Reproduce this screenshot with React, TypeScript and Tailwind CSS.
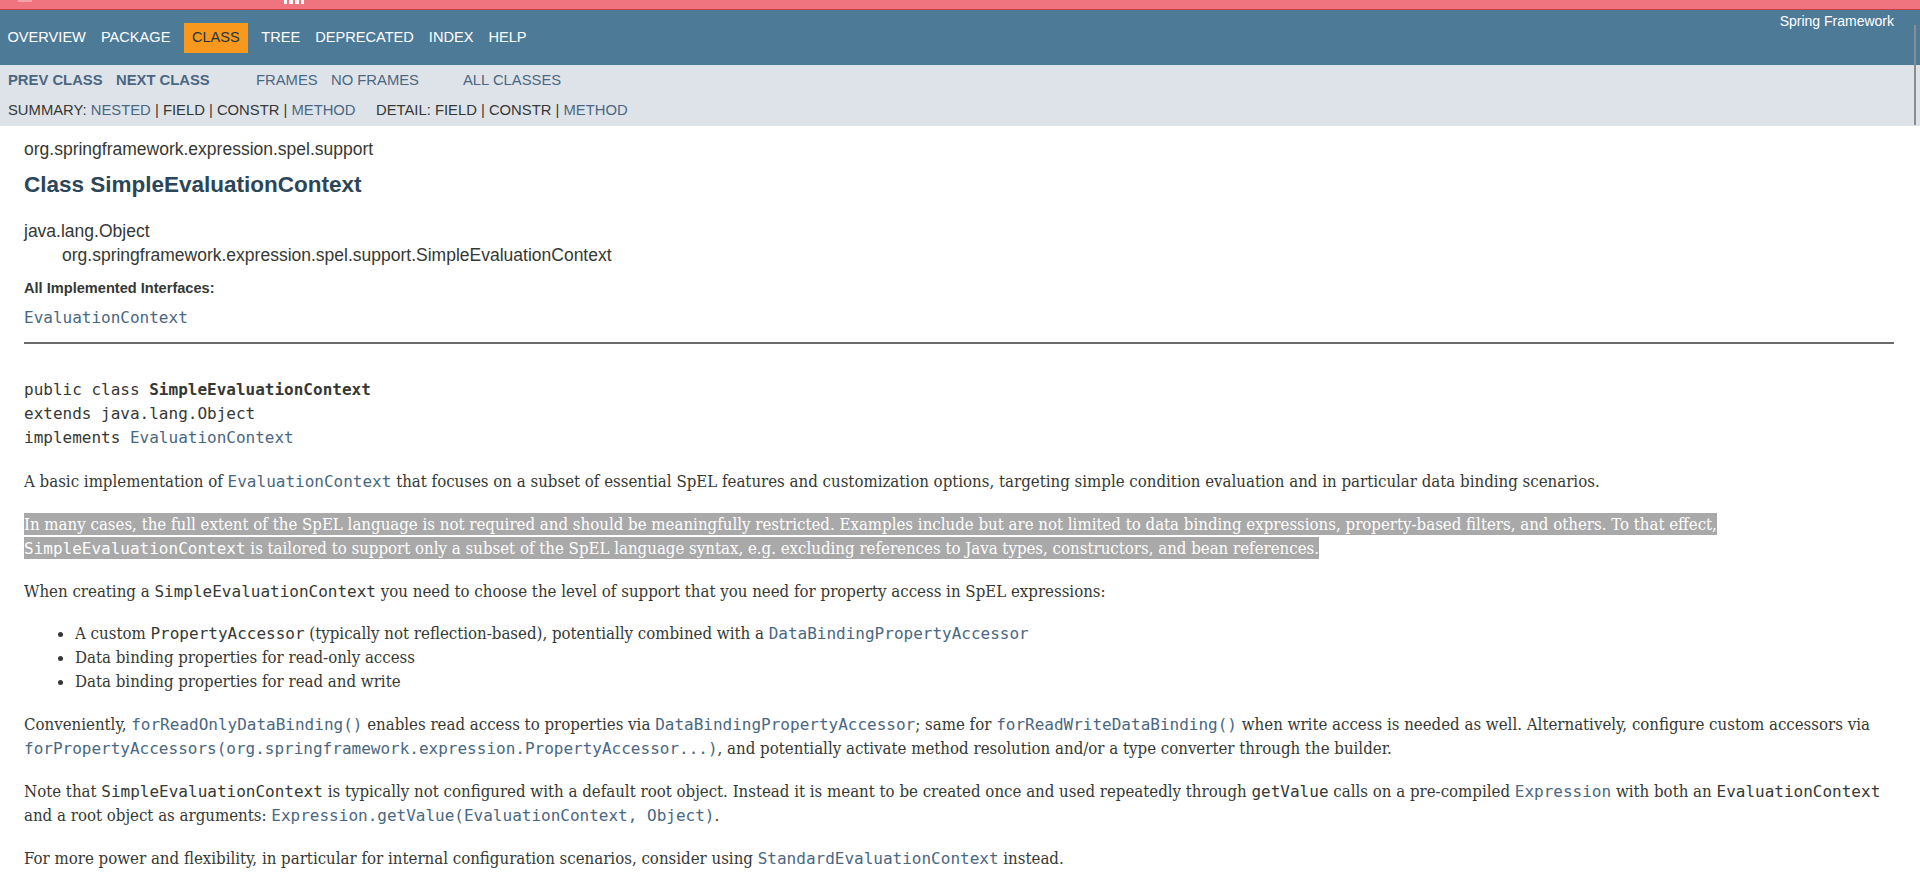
import React from 'react';

const sans = "[font-family:'Liberation_Sans',Arial,sans-serif]";
const serif = "[font-family:'DejaVu_Serif_Condensed','DejaVu_Serif','Liberation_Serif',serif] [font-stretch:condensed]";
const mono = "[font-family:'DejaVu_Sans_Mono','Liberation_Mono',monospace] [font-stretch:normal]";

const Code: React.FC<{ children: React.ReactNode; link?: boolean }> = ({ children, link }) => (
  <code className={`${mono} text-[16px] leading-none ${link ? 'text-[#4a6782]' : 'text-[#353833]'}`}>{children}</code>
);

const navItems = ['OVERVIEW', 'PACKAGE', 'CLASS', 'TREE', 'DEPRECATED', 'INDEX', 'HELP'];

const App: React.FC = () => {
  return (
    <div className={`relative min-h-screen overflow-hidden bg-white ${sans} text-[#353833]`}>
      {/* pink strip left over from the browser chrome */}
      <div className="flex h-[10px] items-start border-b border-[#c8404a] bg-[#f07380]">
        <div className="ml-[18px] mt-0 h-[2px] w-[14px] bg-[#f5a2aa]" />
        <div className="ml-[252px] flex h-[4px] gap-[2px]">
          <span className="w-[3px] bg-white" />
          <span className="w-[4px] bg-white" />
          <span className="w-[4px] bg-white" />
          <span className="w-[3px] bg-white" />
        </div>
      </div>

      {/* top nav */}
      <div className="flex h-[55px] items-start justify-between bg-[#4d7a97]">
        <ul className="flex items-start pt-[13px] text-[14.6px] text-white">
          {navItems.map((item) =>
            item === 'CLASS' ? (
              <li key={item} className="mx-[6px] flex h-[30px] items-center bg-[#f8981d] px-[8px] text-[#253441]">
                {item}
              </li>
            ) : (
              <li key={item} className="flex h-[30px] items-center px-[7.5px]">
                {item}
              </li>
            )
          )}
        </ul>
        <div className="pr-[26px] pt-[1px] text-[14px] text-white">Spring Framework</div>
      </div>

      {/* sub nav */}
      <div className="h-[61px] bg-[#dee3e9] pl-[8px] text-[14.8px]">
        <div className="flex h-[30px] items-center">
          <span className="w-[108px] font-bold text-[#4a6782]">PREV CLASS</span>
          <span className="w-[140px] font-bold text-[#4a6782]">NEXT CLASS</span>
          <span className="w-[75px] text-[#4a6782]">FRAMES</span>
          <span className="w-[132px] text-[#4a6782]">NO FRAMES</span>
          <span className="text-[#4a6782]">ALL CLASSES</span>
        </div>
        <div className="flex h-[30px] items-center">
          <span className="w-[368px]">
            SUMMARY: <span className="text-[#4a6782]">NESTED</span> | FIELD | CONSTR |{' '}
            <span className="text-[#4a6782]">METHOD</span>
          </span>
          <span>
            DETAIL: FIELD | CONSTR | <span className="text-[#4a6782]">METHOD</span>
          </span>
        </div>
      </div>

      {/* content */}
      <div className="pl-[24px] pr-[26px] pt-[13px]">
        <div className="text-[17.5px] leading-[20px]">org.springframework.expression.spel.support</div>
        <h2 className="mt-[13px] text-[22.5px] font-bold leading-[26px] text-[#2c4557]">Class SimpleEvaluationContext</h2>

        <div className="mt-[21px] text-[17.5px] leading-[24px]">
          <div>java.lang.Object</div>
          <div className="pl-[38px]">org.springframework.expression.spel.support.SimpleEvaluationContext</div>
        </div>

        <div className="mt-[12px] text-[14.6px] font-bold leading-[18px]">All Implemented Interfaces:</div>
        <div className="mt-[9px] leading-[24px]">
          <Code link>EvaluationContext</Code>
        </div>

        <hr className="mt-[12px] border-0 border-t-2 border-[#6a6a6a]" />

        <pre className={`mt-[34px] ${mono} text-[16px] leading-[24px] text-[#353833]`}>
          public class <b>SimpleEvaluationContext</b>
          {'\n'}extends java.lang.Object
          {'\n'}implements <span className="text-[#4a6782]">EvaluationContext</span>
        </pre>

        <div className={`${serif} text-[16.7px] leading-[24px] text-[#353833]`}>
          <p className="mt-[19px]">
            A basic implementation of <Code link>EvaluationContext</Code> that focuses on a subset of essential SpEL
            features and customization options, targeting simple condition evaluation and in particular data binding
            scenarios.
          </p>

          <p className="mt-[19px]">
            <span className="bg-[#a9a9a9] py-[1px] text-white [box-decoration-break:clone]">
              In many cases, the full extent of the SpEL language is not required and should be meaningfully
              restricted. Examples include but are not limited to data binding expressions, property-based filters, and
              others. To that effect, <code className={`${mono} text-[16px] leading-none`}>SimpleEvaluationContext</code> is
              tailored to support only a subset of the SpEL language syntax, e.g. excluding references to Java types,
              constructors, and bean references.
            </span>
          </p>

          <p className="mt-[19px]">
            When creating a <Code>SimpleEvaluationContext</Code> you need to choose the level of support that you need
            for property access in SpEL expressions:
          </p>

          <ul className="mt-[18px] list-disc pl-[51px]">
            <li>
              A custom <Code>PropertyAccessor</Code> (typically not reflection-based), potentially combined with a{' '}
              <Code link>DataBindingPropertyAccessor</Code>
            </li>
            <li>Data binding properties for read-only access</li>
            <li>Data binding properties for read and write</li>
          </ul>

          <p className="mt-[19px]">
            Conveniently, <Code link>forReadOnlyDataBinding()</Code> enables read access to properties via{' '}
            <Code link>DataBindingPropertyAccessor</Code>; same for <Code link>forReadWriteDataBinding()</Code> when
            write access is needed as well. Alternatively, configure custom accessors via{' '}
            <Code link>forPropertyAccessors(org.springframework.expression.PropertyAccessor...)</Code>, and potentially
            activate method resolution and/or a type converter through the builder.
          </p>

          <p className="mt-[19px]">
            Note that <Code>SimpleEvaluationContext</Code> is typically not configured with a default root object.
            Instead it is meant to be created once and used repeatedly through <Code>getValue</Code> calls on a
            pre-compiled <Code link>Expression</Code> with both an <Code>EvaluationContext</Code> and a root object as
            arguments: <Code link>Expression.getValue(EvaluationContext, Object)</Code>.
          </p>

          <p className="mt-[19px]">
            For more power and flexibility, in particular for internal configuration scenarios, consider using{' '}
            <Code link>StandardEvaluationContext</Code> instead.
          </p>
        </div>
      </div>

      {/* overlay scrollbar thumb */}
      <div className="absolute right-[4px] top-[25px] h-[100px] w-[2px] bg-[#8c8c8c]" />
    </div>
  );
};

export default App;
